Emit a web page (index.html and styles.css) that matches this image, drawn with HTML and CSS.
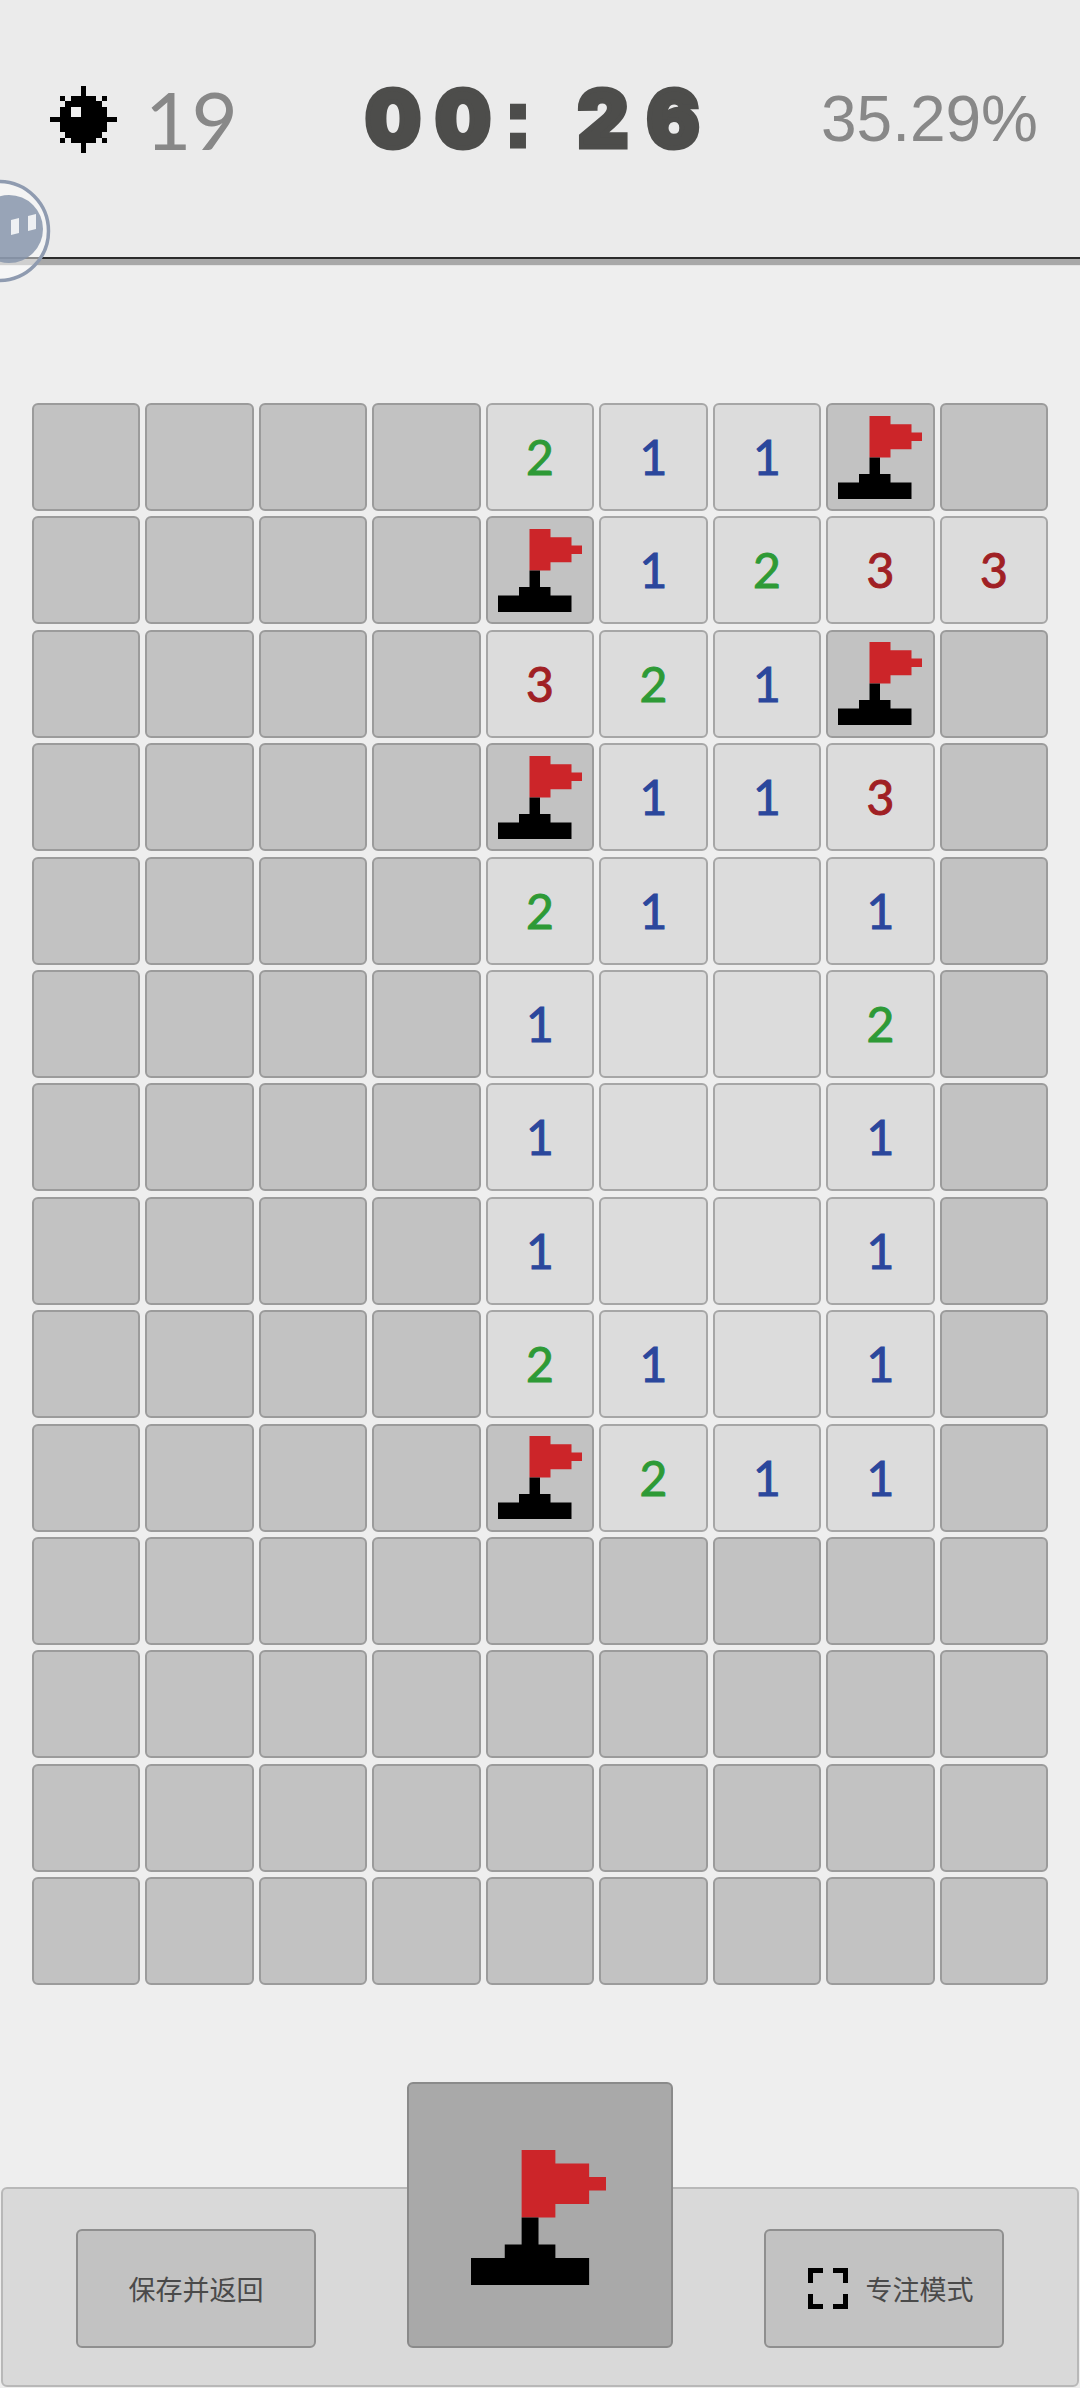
FILE: index.html
```html
<!DOCTYPE html>
<html lang="zh-CN">

<head>
    <meta charset="UTF-8">
    <meta name="viewport" content="width=device-width, initial-scale=1.0">
    <title>扫雷</title>
    <link rel="stylesheet" href="styles.css">
</head>

<body>
    <!-- Shared pixel flag, stretched to whatever box it is used in -->
    <svg class="defs" aria-hidden="true">
        <symbol id="flag" viewBox="0 0 8 10" preserveAspectRatio="none">
            <path fill="#cc2529" d="M3 0h2v1h2v1h1v1H7v1H5v1H3z" />
            <path fill="#000" d="M3 5h1v2h1v1h2v2H0V8h2V7h1z" />
        </symbol>
    </svg>

    <header class="status-bar">
        <div class="mines">
            <svg class="mine-icon" viewBox="0 0 13 13" shape-rendering="crispEdges">
                <path fill="#000" d="M6 0h1v2h2v1h1v1h1v2h2v1h-2v2h-1v1H9v1H7v2H6v-2H4v-1H3V9H2V7H0V6h2V4h1V3h1V2h2z" />
                <path fill="#000" d="M2 2h1v1H2zM10 2h1v1h-1zM2 10h1v1H2zM10 10h1v1h-1z" />
                <path fill="#f1f1f1" d="M4 4h2v2H4z" />
            </svg>
            <span class="mines-left">19</span>
        </div>
        <div class="timer">
            <span class="timer-digit">0</span>
            <span class="timer-digit">0</span>
            <span class="timer-colon">:</span>
            <span class="timer-digit">2</span>
            <span class="timer-digit">6</span>
        </div>
        <div class="progress">35.29%</div>
    </header>

    <!-- Floating assistant ball, hanging over the left edge -->
    <svg class="float-ball" viewBox="0 0 56 110">
        <circle cx="-1" cy="53" r="49.5" fill="#fff" fill-opacity="0.45" stroke="#8f9bb0" stroke-width="3.5" />
        <circle cx="9" cy="51" r="34" fill="#8492a9" fill-opacity="0.82" />
        <path fill="#eef0f3" d="M11 42l8-2v15l-8 2zM28 38l8-2v15l-8 2z" />
    </svg>

    <main class="board">
        <div class="cell"></div><div class="cell"></div><div class="cell"></div><div class="cell"></div>
        <div class="cell open n2">2</div><div class="cell open n1">1</div><div class="cell open n1">1</div>
        <div class="cell"><svg class="flag"><use href="#flag" /></svg></div><div class="cell"></div>

        <div class="cell"></div><div class="cell"></div><div class="cell"></div><div class="cell"></div>
        <div class="cell"><svg class="flag"><use href="#flag" /></svg></div><div class="cell open n1">1</div>
        <div class="cell open n2">2</div><div class="cell open n3">3</div><div class="cell open n3">3</div>

        <div class="cell"></div><div class="cell"></div><div class="cell"></div><div class="cell"></div>
        <div class="cell open n3">3</div><div class="cell open n2">2</div><div class="cell open n1">1</div>
        <div class="cell"><svg class="flag"><use href="#flag" /></svg></div><div class="cell"></div>

        <div class="cell"></div><div class="cell"></div><div class="cell"></div><div class="cell"></div>
        <div class="cell"><svg class="flag"><use href="#flag" /></svg></div><div class="cell open n1">1</div>
        <div class="cell open n1">1</div><div class="cell open n3">3</div><div class="cell"></div>

        <div class="cell"></div><div class="cell"></div><div class="cell"></div><div class="cell"></div>
        <div class="cell open n2">2</div><div class="cell open n1">1</div><div class="cell open"></div>
        <div class="cell open n1">1</div><div class="cell"></div>

        <div class="cell"></div><div class="cell"></div><div class="cell"></div><div class="cell"></div>
        <div class="cell open n1">1</div><div class="cell open"></div><div class="cell open"></div>
        <div class="cell open n2">2</div><div class="cell"></div>

        <div class="cell"></div><div class="cell"></div><div class="cell"></div><div class="cell"></div>
        <div class="cell open n1">1</div><div class="cell open"></div><div class="cell open"></div>
        <div class="cell open n1">1</div><div class="cell"></div>

        <div class="cell"></div><div class="cell"></div><div class="cell"></div><div class="cell"></div>
        <div class="cell open n1">1</div><div class="cell open"></div><div class="cell open"></div>
        <div class="cell open n1">1</div><div class="cell"></div>

        <div class="cell"></div><div class="cell"></div><div class="cell"></div><div class="cell"></div>
        <div class="cell open n2">2</div><div class="cell open n1">1</div><div class="cell open"></div>
        <div class="cell open n1">1</div><div class="cell"></div>

        <div class="cell"></div><div class="cell"></div><div class="cell"></div><div class="cell"></div>
        <div class="cell"><svg class="flag"><use href="#flag" /></svg></div><div class="cell open n2">2</div>
        <div class="cell open n1">1</div><div class="cell open n1">1</div><div class="cell"></div>

        <div class="cell"></div><div class="cell"></div><div class="cell"></div><div class="cell"></div><div class="cell"></div><div class="cell"></div><div class="cell"></div><div class="cell"></div><div class="cell"></div>
        <div class="cell"></div><div class="cell"></div><div class="cell"></div><div class="cell"></div><div class="cell"></div><div class="cell"></div><div class="cell"></div><div class="cell"></div><div class="cell"></div>
        <div class="cell"></div><div class="cell"></div><div class="cell"></div><div class="cell"></div><div class="cell"></div><div class="cell"></div><div class="cell"></div><div class="cell"></div><div class="cell"></div>
        <div class="cell"></div><div class="cell"></div><div class="cell"></div><div class="cell"></div><div class="cell"></div><div class="cell"></div><div class="cell"></div><div class="cell"></div><div class="cell"></div>
    </main>

    <footer class="toolbar">
        <button class="tool-btn">保存并返回</button>
        <button class="mode-btn"><svg class="mode-flag"><use href="#flag" /></svg></button>
        <button class="tool-btn focus-btn">
            <svg class="focus-icon" viewBox="0 0 40 41" shape-rendering="crispEdges">
                <path fill="#000" d="M0 0h15v5H5v10H0zM25 0h15v15h-5V5H25zM0 26h5v10h10v5H0zM35 26h5v15H25v-5h10z" />
            </svg>
            专注模式
        </button>
    </footer>
</body>

</html>
```

FILE: styles.css
```css
* {
    margin: 0;
    padding: 0;
    box-sizing: border-box;
}

body {
    position: relative;
    width: 1080px;
    height: 2388px;
    overflow: hidden;
    background-color: #eeeeee;
    font-family: "Lato", "Noto Sans CJK SC", sans-serif;
}

.defs {
    position: absolute;
    width: 0;
    height: 0;
}

/* Status bar */
.status-bar {
    display: flex;
    align-items: center;
    height: 259px;
    padding: 0 42px 19px 50px;
    background: #ebebeb;
    border-bottom: 2px solid #2b2b2b;
    box-shadow: 0 6px 1px #a8a8a8;
}

.mines {
    display: flex;
    align-items: center;
    gap: 28px;
    width: 315px;
}

.mine-icon {
    width: 67px;
    height: 67px;
}

.mines-left {
    font-size: 80px;
    line-height: 1;
    color: #888888;
}

.timer {
    display: flex;
    align-items: center;
    gap: 14px;
    font-family: "Inter", sans-serif;
    font-weight: 900;
    font-size: 78px;
    line-height: 1;
    color: #4d4d4b;
    -webkit-text-stroke: 5px #4d4d4b;
}

.timer-digit {
    width: 56px;
    text-align: center;
}

.timer-colon {
    width: 16px;
    margin-right: 40px;
    font-family: "Liberation Sans", sans-serif;
    font-weight: 700;
    text-align: center;
}

.progress {
    margin-left: auto;
    font-family: "Liberation Sans", sans-serif;
    font-size: 64px;
    line-height: 1;
    color: #888888;
}

/* Floating ball */
.float-ball {
    position: absolute;
    left: 0;
    top: 178px;
    width: 56px;
    height: 110px;
}

/* Board */
.board {
    display: grid;
    grid-template-columns: repeat(9, 1fr);
    grid-auto-rows: 108px;
    gap: 5.4px;
    padding: 0 32px;
    margin-top: 144px;
}

.cell {
    display: flex;
    align-items: center;
    justify-content: center;
    background: #c2c2c2;
    border: 2px solid #9b9b9b;
    border-radius: 6px;
    font-size: 48px;
    line-height: 1;
    -webkit-text-stroke: 1px currentColor;
}

.open {
    background: #dcdcdc;
    border-color: #a6a6a6;
}

.n1 {
    color: #2b479c;
}

.n2 {
    color: #2e9a36;
}

.n3 {
    color: #a02024;
}

.flag {
    width: 84px;
    height: 83px;
}

/* Bottom toolbar */
.toolbar {
    position: absolute;
    left: 1px;
    right: 1px;
    bottom: 1px;
    display: flex;
    justify-content: space-between;
    align-items: flex-end;
    height: 200px;
    padding: 0 73px 37px;
    background: #d9d9d9;
    border: 2px solid #b8b8b8;
    border-radius: 6px;
}

.tool-btn {
    display: flex;
    align-items: center;
    justify-content: center;
    gap: 18px;
    width: 240px;
    height: 119px;
    background: #c2c2c2;
    border: 2px solid #8f8f8f;
    border-radius: 6px;
    font-family: "Noto Sans CJK SC", sans-serif;
    font-size: 27px;
    color: #4a4a4a;
}

.focus-btn {
    padding-left: 13px;
}

.mode-btn {
    display: flex;
    align-items: center;
    justify-content: center;
    width: 266px;
    height: 266px;
    padding: 5px 3px 0 0;
    background: #a9a9a9;
    border: 2px solid #8a8a8a;
    border-radius: 6px;
}

.mode-flag {
    width: 135px;
    height: 135px;
}

.focus-icon {
    width: 40px;
    height: 41px;
}
```
